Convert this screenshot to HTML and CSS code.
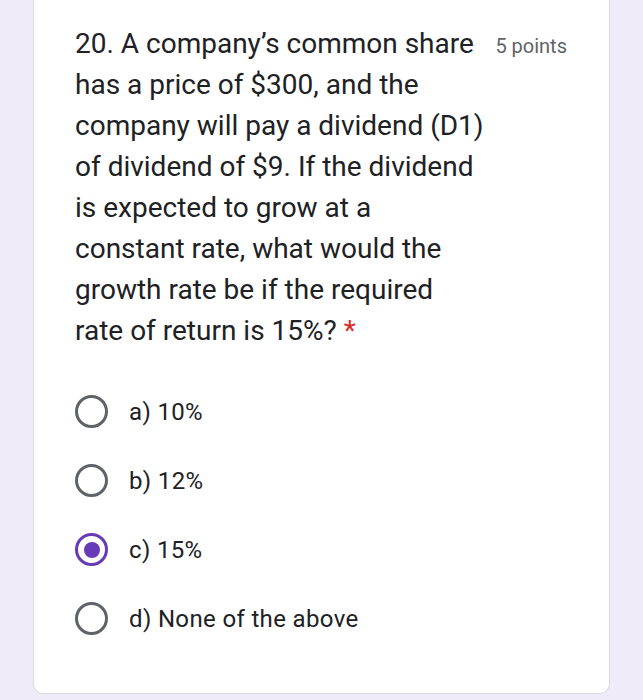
FILE: index.html
```html
<!DOCTYPE html>
<html>
<head>
<meta charset="utf-8">
<link rel="stylesheet" href="styles.css">
</head>
<body>
<div class="card">
  <div class="header">
    <div class="title">20. A company’s common share<br>has a price of $300, and the<br>company will pay a dividend (D1)<br>of dividend of $9. If the dividend<br>is expected to grow at a<br>constant rate, what would the<br>growth rate be if the required<br>rate of return is 15%? <span class="req">*</span></div>
    <div class="points">5 points</div>
  </div>
  <div class="options">
    <div class="option"><span class="radio"></span><span class="label">a) 10%</span></div>
    <div class="option"><span class="radio"></span><span class="label">b) 12%</span></div>
    <div class="option"><span class="radio checked"></span><span class="label">c) 15%</span></div>
    <div class="option"><span class="radio"></span><span class="label">d) None of the above</span></div>
  </div>
</div>
</body>
</html>
```

FILE: styles.css
```css
html, body {
  margin: 0;
  padding: 0;
}
body {
  background: #f0ebf8;
  width: 643px;
  height: 700px;
  overflow: hidden;
  font-family: Roboto, "Liberation Sans", sans-serif;
}
.card {
  margin: -10px 33px 0 33px;
  height: 704px;
  box-sizing: border-box;
  background: #fff;
  border: 1px solid #dadce0;
  border-top: none;
  border-radius: 0 0 10px 10px;
  padding: 33px 42px 0 41px;
}
.header {
  display: flex;
  align-items: baseline;
  justify-content: space-between;
}
.title {
  font-size: 28px;
  line-height: 41px;
  color: #202124;
}
.req {
  color: #d93025;
}
.points {
  font-size: 20px;
  color: #5f6368;
}
.options {
  display: flex;
  flex-direction: column;
  margin-top: 42px;
  gap: 32px;
}
.option {
  display: flex;
  align-items: center;
  height: 37px;
}
.radio {
  width: 27px;
  height: 27px;
  border: 3.5px solid #5f6368;
  border-radius: 50%;
  box-sizing: content-box;
  margin-right: 21px;
  position: relative;
}
.radio.checked {
  border-color: #673ab7;
}
.radio.checked::after {
  content: "";
  position: absolute;
  left: 5.5px;
  top: 5.5px;
  width: 16px;
  height: 16px;
  border-radius: 50%;
  background: #673ab7;
}
.label {
  font-size: 24px;
  letter-spacing: 0.35px;
  color: #202124;
}
```
